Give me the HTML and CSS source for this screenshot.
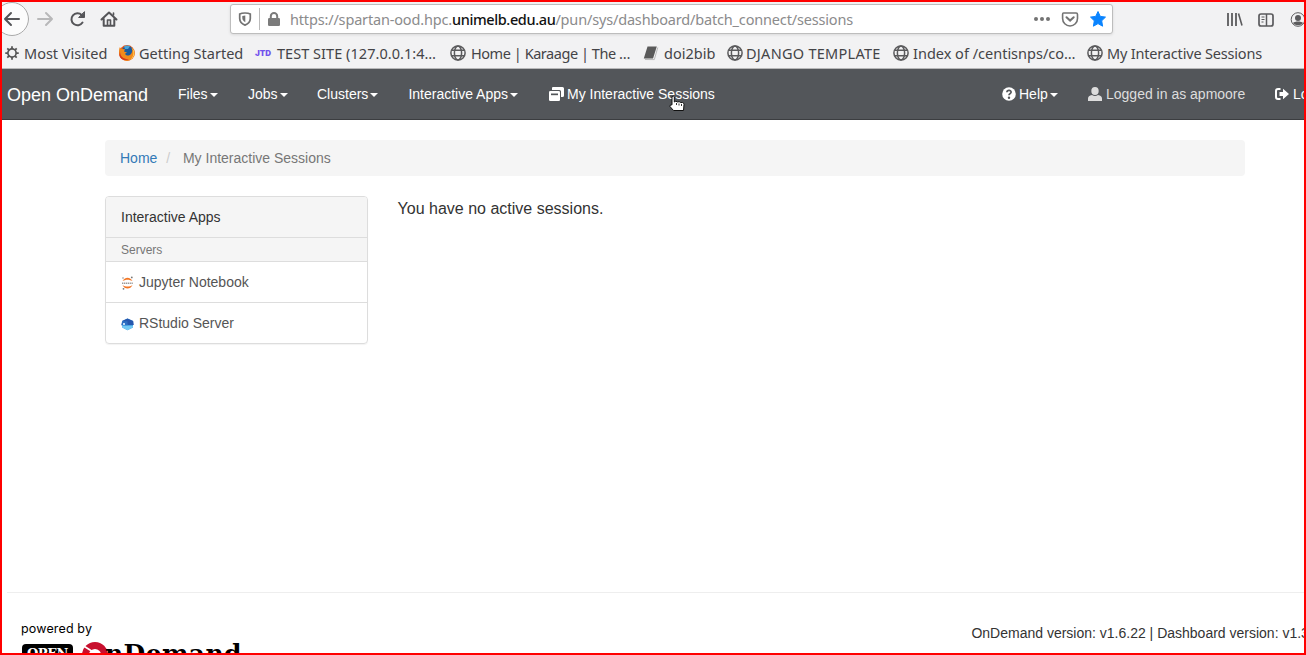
FILE: index.html
```html
<!DOCTYPE html>
<html lang="en">
<head>
<meta charset="utf-8">
<title>My Interactive Sessions</title>
<link rel="stylesheet" href="styles.css">
</head>
<body>
<svg class="defs" width="0" height="0">
  <symbol id="globe" viewBox="0 0 16 16"><g fill="none" stroke="#5a5a5c" stroke-width="1.5"><circle cx="8" cy="8" r="7.1"/><ellipse cx="8" cy="8" rx="3.6" ry="7"/><path d="M2 5.2h12M2 10.8h12"/></g></symbol>
</svg>
<div class="window">
  <div class="toolbar">
    <div class="nav-buttons">
      <svg width="128" height="36" viewBox="0 0 128 36" fill="none" stroke="#555558" stroke-width="2" stroke-linecap="round" stroke-linejoin="round">
        <circle cx="10" cy="17" r="16.5" fill="#fcfcfc" stroke="#aaa" stroke-width="1"/>
        <path d="M17 17H3M9 11L3 17l6 6"/>
        <path d="M36 17h14M44 11l6 6-6 6" stroke="#b8b8b9"/>
        <path d="M80.5 20.5A6 6 0 1 1 79.7 13"/><path d="M82.500 10v5.500h-5.500z" fill="#555558" stroke-width="1"/>
        <path d="M99.500 17.500l7.500-7 7.500 7M101.700 17v6.800h10.600V17" /><path d="M105.500 23v-5h3v5M111.500 11v2" stroke-width="1.600"/>
      </svg>
    </div>
    <div class="urlbar">
      <svg class="shield" width="14" height="14" viewBox="0 0 14 14"><path d="M7 1c2 0 4 .3 5.300 1v4.500c0 3.500-2.500 5.500-5.300 6.600C4.200 12 1.700 10 1.700 6.500V2C3 1.300 5 1 7 1z" fill="none" stroke="#737373" stroke-width="1.700"/><path d="M7.300 3.500v6.800C5.200 9 4.300 7.800 4.300 6V4z" fill="#737373"/></svg>
      <span class="divider"></span>
      <svg class="lock" width="12" height="14" viewBox="0 0 12 14"><path d="M2.800 7V4.200a3.200 3.200 0 0 1 6.400 0V7" fill="none" stroke="#7b7b7b" stroke-width="2"/><rect y="6" width="12" height="8" rx="1.300" fill="#7b7b7b"/></svg>
      <span class="url">https://spartan-ood.hpc.<b>unimelb.edu.au</b>/pun/sys/dashboard/batch_connect/sessions</span>
      <svg class="url-actions" width="74" height="18" viewBox="0 0 74 18"><g fill="#737373"><circle cx="3" cy="9" r="2"/><circle cx="9" cy="9" r="2"/><circle cx="15" cy="9" r="2"/></g><path d="M30.500 3h12.600q1.400 0 1.400 1.400V8.500a7.200 7.200 0 0 1-14.900 0V4.400Q29.600 3 30.500 3z" fill="none" stroke="#737373" stroke-width="1.600"/><path d="M33.500 7.200l3.600 3.400 3.600-3.400" fill="none" stroke="#737373" stroke-width="2" stroke-linecap="round"/><path d="M65 1.500l2.300 4.900 5.200.7-3.800 3.700.9 5.400-4.600-2.600-4.600 2.600.9-5.400-3.800-3.700 5.200-.7z" fill="#0a84ff" stroke="#0a84ff" stroke-linejoin="round"/></svg>
    </div>
    <svg class="window-actions" width="80" height="18" viewBox="0 0 80 18" fill="none" stroke="#5b5b5d" stroke-width="2"><path d="M2 3v13M6 3v13M10 3v13" stroke-width="1.800"/><path d="M12.500 3.500L16 15.500" stroke-width="1.600"/><rect x="33" y="4" width="14" height="12" rx="2" stroke-width="1.700"/><path d="M40.500 4v12" stroke-width="1.500"/><path d="M35.500 7h3M35.500 9.500h3M35.500 12h2" stroke-width="1"/><circle cx="72" cy="9.500" r="6.800" stroke-width="1"/><circle cx="72" cy="8" r="3" fill="#5b5b5d" stroke="none"/><path d="M67 13c1.500-2 8.500-2 10 0-2 3-8 3-10 0z" fill="#5b5b5d" stroke="none"/></svg>
  </div>

  <div class="bookmarks">
    <div class="bookmark visited"><svg viewBox="0 0 16 16"><circle cx="8" cy="8" r="4.700" fill="none" stroke="#555" stroke-width="1.900"/><path d="M8 .3v3M8 12.700v3M.3 8h3M12.700 8h3M2.600 2.600L4.700 4.700M11.300 11.300l2.100 2.100M2.600 13.400l2.100-2.100M11.300 4.700l2.100-2.100" stroke="#555" stroke-width="2"/></svg>Most Visited</div>
    <div class="bookmark started"><svg viewBox="0 0 16 16"><circle cx="8" cy="8" r="7.900" fill="#e8591c"/><circle cx="8.600" cy="6.500" r="5.800" fill="#1b5b9f"/><path d="M5 1.500Q8-.5 11 1.200L9 4 6 4z" fill="#48a6d9"/><path d="M.7 2.300L3 4l3 .3-1 2.200 3 1-2 1.300c1 2.600 5 2.400 6.500-.5 1.300-2.300.8-4.500-.5-6.300 3.500 2.300 4.800 6 2.400 9.800C12 17 4 17 1.200 12-.5 8.700-.2 5 .7 2.300z" fill="#f28a1c"/><path d="M13.300 3c3.300 4 2.500 9-2 11.800 3.500-3.800 3.800-7 2-11.800z" fill="#ffd35a"/><path d="M1 6c0 6 4 8.500 9 8-4 2.500-9 .5-9.600-4z" fill="#d8361c"/></svg>Getting Started</div>
    <div class="bookmark test"><span class="jtd">JTD</span>TEST SITE (127.0.0.1:4…</div>
    <div class="bookmark karaage"><svg viewBox="0 0 16 16"><use href="#globe"/></svg>Home | Karaage | The …</div>
    <div class="bookmark doi"><svg viewBox="0 0 16 16"><path d="M4.500 1.500h9.300L10 13.500H.8z" fill="#5a5a5a"/><path d="M14.800 2.500L11.300 14.600 2 14.500" fill="none" stroke="#bbb"/></svg>doi2bib</div>
    <div class="bookmark django"><svg viewBox="0 0 16 16"><use href="#globe"/></svg>DJANGO TEMPLATE</div>
    <div class="bookmark index"><svg viewBox="0 0 16 16"><use href="#globe"/></svg>Index of /centisnps/co…</div>
    <div class="bookmark sessions"><svg viewBox="0 0 16 16"><use href="#globe"/></svg>My Interactive Sessions</div>
  </div>

  <nav class="navbar">
    <a class="brand">Open OnDemand</a>
    <a class="nav-item files">Files<i class="caret"></i></a>
    <a class="nav-item jobs">Jobs<i class="caret"></i></a>
    <a class="nav-item clusters">Clusters<i class="caret"></i></a>
    <a class="nav-item apps">Interactive Apps<i class="caret"></i></a>
    <a class="nav-item mine"><svg width="15" height="14" viewBox="0 0 15 14"><path d="M4 0h9.500Q15 0 15 1.500v7q0 1.500-1.500 1.500H12V4.500Q12 3 10.500 3H3V1q0-1 1-1z" fill="#fff"/><path d="M1.300 4h8.400Q11 4 11 5.300v7.400q0 1.300-1.300 1.300H1.300Q0 14 0 12.700V5.300Q0 4 1.300 4z" fill="#fff"/><path d="M2 6.500h7v1.700H2z" fill="#53565a"/></svg>My Interactive Sessions</a>
    <a class="nav-item help"><svg width="14" height="14" viewBox="0 0 14 14"><circle cx="7" cy="7" r="6.800" fill="#fff"/><path d="M4.900 5.300C5 2.600 9.300 2.900 9.100 5.200 9 6.700 7 6.600 7 8.300" fill="none" stroke="#53565a" stroke-width="1.700"/><circle cx="7" cy="10.700" r="1.200" fill="#53565a"/></svg>Help<i class="caret"></i></a>
    <span class="nav-item user"><svg width="14" height="14" viewBox="0 0 14 14"><ellipse cx="7" cy="4" rx="3.700" ry="4" fill="#ddd"/><path d="M0 14v-2.500Q0 8.500 4 8q3 1.800 6 0 4 .5 4 3.500V14z" fill="#ddd"/></svg>Logged in as apmoore</span>
    <a class="nav-item logout"><svg width="14" height="12" viewBox="0 0 14 12"><path d="M5.500 1H3Q1 1 1 3v6q0 2 2 2h2.500" fill="none" stroke="#fff" stroke-width="2"/><path d="M4.500 4H8V.8L14 6 8 11.200V8H4.500z" fill="#fff"/></svg>Log Out</a>
    <svg class="cursor" width="17" height="18" viewBox="0 0 17 18"><path d="M3 1.500Q4.500.5 5.300 2v5l1.500-.8L8.500 7l1.700-.3 1.500.9 2-.1q1.300.5 1.300 2l-.5 6H4.500L1 11.500q-.4-2 2-1.700z" fill="#fff" stroke="#111"/><path d="M7.500 8v2M10 8.500v2M12.500 9v2" stroke="#333" stroke-width="1"/></svg>
  </nav>

  <main class="container">
    <div class="breadcrumb"><a>Home</a><span class="slash">/</span><span>My Interactive Sessions</span></div>
    <div class="row">
      <aside class="panel">
        <div class="panel-heading">Interactive Apps</div>
        <div class="panel-group">Servers</div>
        <div class="panel-item"><svg width="14" height="14" viewBox="0 0 14 14"><path d="M1.500 5.300c2-4.800 8-4.800 10 0-3-2-7-2-10 0zM1.500 9c2 4.800 8 4.800 10 0-3 2-7 2-10 0z" fill="#f37726"/><path d="M1 7.200h11" stroke="#999" stroke-width="1.500" stroke-dasharray="1.300 .6"/><circle cx="2" cy="2" r=".7" fill="#777"/><circle cx="10.800" cy="1.400" r=".9" fill="#777"/><circle cx="2.500" cy="12.800" r=".9" fill="#777"/></svg>Jupyter Notebook</div>
        <div class="panel-item"><svg width="14" height="14" viewBox="0 0 14 14"><path d="M6.500 1.500l5.500 2.500v6.500l-5.500 2.700-5.300-2.700V4z" fill="#3d9be0"/><path d="M6.500 1.500L12.200 4l.6 4h-6L1 4z" fill="#2557ad"/><path d="M1.200 4.300h5.300v4H.1z" fill="#2d6fc3"/><path d="M1.200 8.800H12v1.700l-5.500 2.700-5.300-2.700z" fill="#72c8f4"/><circle cx="3" cy="7" r="1.100" fill="#e6f5ff"/></svg>RStudio Server</div>
      </aside>
      <p class="message">You have no active sessions.</p>
    </div>
  </main>

  <footer class="footer">
    <div class="powered">
      <div class="powered-text">powered by</div>
      <div class="logo"><span class="open">OPEN</span><svg width="30" height="30" viewBox="0 0 30 30"><circle cx="15" cy="15" r="11" fill="none" stroke="#c8102e" stroke-width="8"/><path d="M1 4L20 16" stroke="#fff" stroke-width="2"/></svg><span class="wordmark">nDemand</span></div>
    </div>
    <div class="versions">OnDemand version: v1.6.22 | Dashboard version: v1.35.3</div>
  </footer>
</div>
</body>
</html>
```

FILE: styles.css
```css
* { box-sizing: border-box; }
body { margin: 0; background: #fff; font: 14px/20px "Liberation Sans", Arial, sans-serif; color: #333; overflow: hidden; }
.defs { position: absolute; }
.window { position: relative; display: flex; flex-direction: column; width: 1306px; height: 655px; border: 2px solid #f00; overflow: hidden; }
.window svg { flex: none; }
.toolbar { display: flex; align-items: flex-start; height: 35px; flex: none; background: #f2f2f3; }
.nav-buttons { width: 228px; height: 35px; flex: none; overflow: hidden; }
.nav-buttons svg { display: block; }
.urlbar { display: flex; align-items: center; flex: none; width: 883px; height: 30px; margin-top: 2px; padding-left: 7px; background: #fff; border: 1px solid #bdbdbd; border-radius: 3px; box-shadow: 0 1px 3px rgba(0,0,0,.1); }
.divider { width: 1px; height: 22px; margin: 0 8px 0 7px; background: #bbb; }
.url { width: 743px; flex: none; margin-left: 10px; font: 14.5px/20px "Noto Sans", sans-serif; letter-spacing: -.17px; color: #8b8b8c; white-space: nowrap; }
.url b { font-weight: 500; letter-spacing: -.38px; color: #111; }
.window-actions { margin: 8px 0 0 113px; }
.bookmarks { display: flex; align-items: center; height: 32px; flex: none; padding-left: 3px; background: #f2f2f3; border-bottom: 1px solid #b8b8b9; font: 14.5px/20px "Noto Sans", sans-serif; color: #444447; }
.bookmark { display: flex; align-items: center; flex: none; white-space: nowrap; }
.bookmark svg { width: 16px; height: 16px; margin-right: 4px; }
.visited { width: 114px; }
.visited svg { width: 14px; height: 14px; margin-right: 5px; }
.started { width: 136px; }
.test { width: 195px; letter-spacing: .04px; }
.jtd { width: 22px; font: 900 8px/12px "Inter", sans-serif; color: #7253ed; }
.karaage { width: 193px; letter-spacing: -.45px; }
.karaage svg, .doi svg { margin-right: 5px; }
.doi { width: 84px; }
.django { width: 166px; letter-spacing: .28px; }
.django svg { margin-right: 3px; }
.index { width: 194px; }
.sessions { letter-spacing: -.18px; }
.navbar { position: relative; display: flex; align-items: center; flex: none; height: 51px; padding-left: 5px; background: #53565a; border-bottom: 1px solid #3b3d40; color: #fff; white-space: nowrap; }
.brand { width: 171px; flex: none; padding-top: 2px; font-size: 18px; }
.nav-item { display: flex; align-items: center; flex: none; }
.nav-item svg { margin-right: 4px; }
.caret { width: 0; height: 0; margin: 1px 0 0 2px; border: 4px solid transparent; border-top-color: #fff; border-bottom: 0; }
.files { width: 70px; }
.jobs { width: 69px; }
.clusters { width: 91.4px; }
.apps { width: 140.6px; }
.mine { width: 453px; }
.nav-item.mine svg { margin-right: 3px; }
.help { width: 86px; }
.nav-item.help svg { margin-right: 3px; }
.user { width: 187px; color: #ddd; }
.cursor { position: absolute; left: 667px; top: 26px; }
.container { width: 1140px; flex: none; height: 472px; margin-left: 103px; padding-top: 20px; }
.breadcrumb { display: flex; height: 36px; padding: 8px 15px; background: #f5f5f5; border-radius: 4px; color: #777; }
.breadcrumb a { color: #337ab7; }
.slash { width: 25.6px; padding-left: 9px; color: #ccc; }
.row { display: flex; margin-top: 20px; gap: 30px; }
.panel { width: 263px; height: 148px; border: 1px solid #ddd; border-radius: 4px; box-shadow: 0 1px 1px rgba(0,0,0,.05); overflow: hidden; }
.panel-heading { height: 41px; padding: 10px 15px; background: #f5f5f5; border-bottom: 1px solid #ddd; }
.panel-group { height: 24px; padding: 2px 15px; background: #f5f5f5; border-bottom: 1px solid #ddd; font-size: 12px; color: #777; }
.panel-item { display: flex; align-items: center; height: 40px; padding: 0 15px; color: #555; }
.panel-item + .panel-item { height: 41px; border-top: 1px solid #ddd; }
.panel-item svg { margin: 1px 4px 0 0; width: 14px; }
.message { margin: 3px 0 0 -.4px; font-size: 16px; line-height: 20px; }
.footer { display: flex; justify-content: space-between; flex: none; height: 80px; margin-left: 5px; border-top: 1px solid #eee; white-space: nowrap; }
.powered { width: 240px; padding: 26px 0 0 14px; color: #000; }
.powered-text { font: 12.5px/20px "Inter", sans-serif; letter-spacing: .15px; }
.logo { display: flex; align-items: flex-start; margin-top: 3px; }
.open { width: 51px; height: 24px; margin: 2px 9px 0 1px; border-radius: 4px; background: #000; color: #fff; font: bold 13px/19px "DejaVu Serif", serif; text-align: center; letter-spacing: -.5px; }
.logo svg { width: 26px; height: 26px; margin: 0 -3px 0 0; }
.wordmark { font: bold 25px/24px "DejaVu Serif", serif; letter-spacing: .4px; }
.versions { width: 332.6px; padding-top: 30px; }
```
